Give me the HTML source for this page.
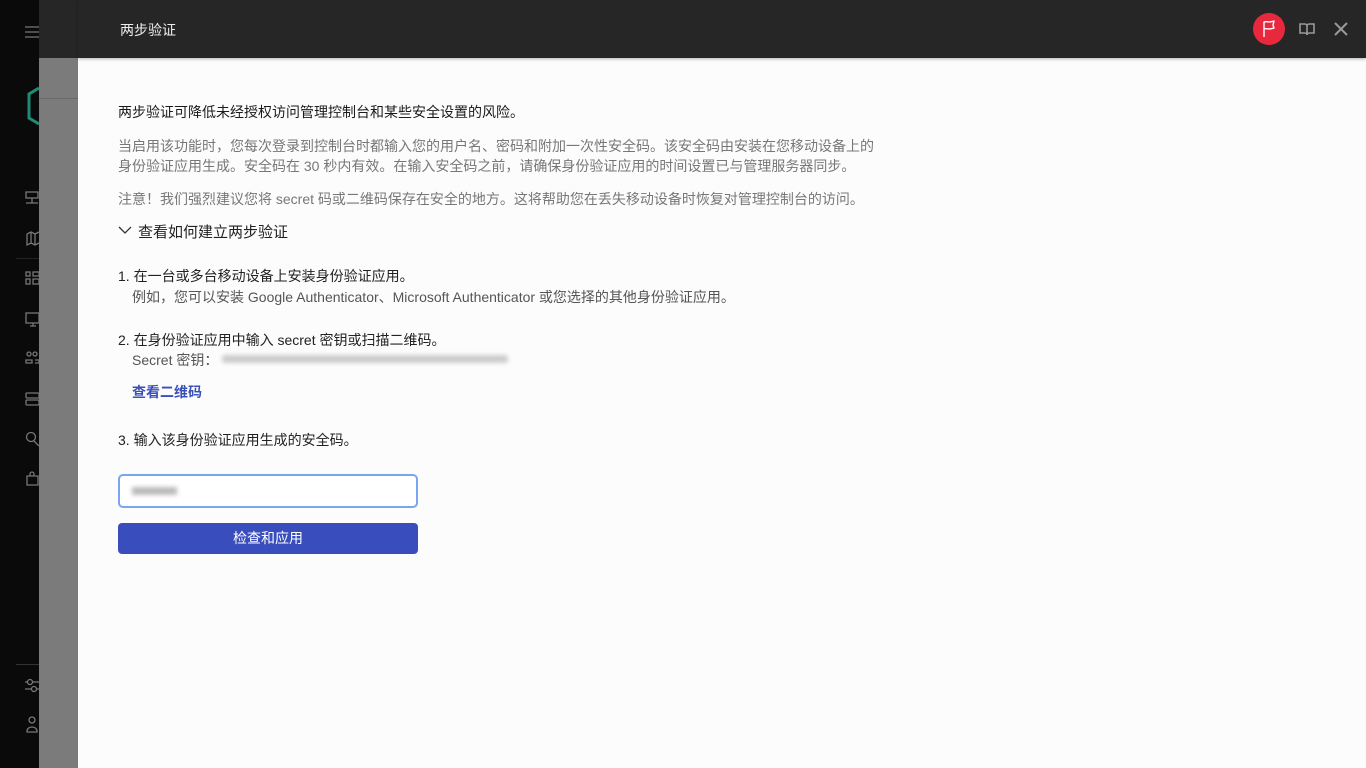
<!DOCTYPE html>
<html><head><meta charset="utf-8"><style>
*{margin:0;padding:0;box-sizing:border-box}
body{width:1366px;height:768px;overflow:hidden;background:#fcfcfc;font-family:"Liberation Sans","Noto Sans CJK SC",sans-serif;font-size:14px;position:relative}
.sb{position:absolute;left:0;top:0;width:39px;height:768px;background:#0a0a0a}
.ov{position:absolute;left:39px;top:0;width:39px;height:768px;background:#7b7b7b}
.ovh{position:absolute;left:39px;top:0;width:39px;height:58px;background:#262626}
.hd{position:absolute;left:78px;top:0;width:1288px;height:58px;background:#262626;box-shadow:0 1px 3px rgba(0,0,0,.3)}
.t{position:absolute;white-space:nowrap}
.ic{position:absolute}
</style></head><body>
<div class="sb"></div>
<div class="ov"></div>
<div class="ovh"></div>
<div style="position:absolute;left:39px;top:98px;width:39px;height:1px;background:#6a6a6a"></div>
<svg class="ic" style="left:0;top:0" width="39" height="768" fill="none" stroke="#777" stroke-width="1.3">
<path d="M25 27h14M25 32h14M25 37h14"/>
<path d="M39 88l-10 6v24l10 6" stroke="#1e8c74" stroke-width="3"/>
<rect x="26" y="192" width="12" height="6"/><path d="M32 198v5M26 203h12"/>
<path d="M27 234v11l4-2 4 2 4-2M27 234l4-2 4 2 4-2M31 232v11M35 234v11"/>
<rect x="26" y="272" width="4" height="4"/><rect x="33" y="272" width="6" height="4"/><rect x="26" y="279" width="4" height="5"/><rect x="33" y="279" width="6" height="5"/>
<rect x="26" y="313" width="13" height="10"/><path d="M30 326h6M33 323v3"/>
<circle cx="29" cy="354" r="2"/><circle cx="35" cy="354" r="2"/><path d="M26 363v-3h6v3zM35 360h4v3h-4"/>
<rect x="26" y="393" width="13" height="5" rx="1"/><rect x="26" y="400" width="13" height="5" rx="1"/>
<circle cx="31" cy="437" r="4.5"/><path d="M34 441l5 5"/>
<path d="M27 476h11v9H27zM30 476v-2a2 2 0 014 0v2"/>
<path d="M25 682h14M25 689h14"/><circle cx="30" cy="682" r="2.5" fill="#0a0a0a"/><circle cx="34" cy="689" r="2.5" fill="#0a0a0a"/>
<circle cx="32" cy="720" r="3"/><path d="M27 731a5 4 0 0110 0v1H27z"/>
</svg>
<div style="position:absolute;left:16px;top:664px;width:23px;height:1px;background:#333"></div>
<div style="position:absolute;left:16px;top:258px;width:23px;height:1px;background:#222"></div>
<div class="hd"></div>
<div class="t" style="left:120px;top:20px;color:#eee;font-size:14px">两步验证</div>
<div style="position:absolute;left:1253px;top:13px;width:32px;height:32px;border-radius:50%;background:#e8283c"></div>
<svg class="ic" style="left:1253px;top:13px" width="32" height="32" fill="none" stroke="#fff" stroke-width="1.4" stroke-linejoin="round"><path d="M11 24V9c3-1 5 1 10-1l-1 4 1 3c-5 2-7 0-10 1"/></svg>
<svg class="ic" style="left:1298px;top:20px" width="18" height="18" fill="none" stroke="#999" stroke-width="1.6"><path d="M2 4h5a2 2 0 012 2v9a2 2 0 00-2-2H2zM16 4h-5a2 2 0 00-2 2v9a2 2 0 012-2h5z"/></svg>
<svg class="ic" style="left:1333px;top:21px" width="16" height="16" stroke="#999" stroke-width="2"><path d="M2 2l12 12M14 2L2 14"/></svg>

<div class="t" style="left:118px;top:102px;color:#1a1a1a">两步验证可降低未经授权访问管理控制台和某些安全设置的风险。</div>
<div class="t" style="left:118px;top:136px;color:#777;line-height:20px">当启用该功能时，您每次登录到控制台时都输入您的用户名、密码和附加一次性安全码。该安全码由安装在您移动设备上的<br>身份验证应用生成。安全码在 30 秒内有效。在输入安全码之前，请确保身份验证应用的时间设置已与管理服务器同步。</div>
<div class="t" style="left:118px;top:189px;color:#777">注意！我们强烈建议您将 secret 码或二维码保存在安全的地方。这将帮助您在丢失移动设备时恢复对管理控制台的访问。</div>
<svg class="ic" style="left:118px;top:225px" width="14" height="10" fill="none" stroke="#333" stroke-width="1.3"><path d="M1 2l6 6 6-6"/></svg>
<div class="t" style="left:138px;top:221px;color:#222;font-size:15px">查看如何建立两步验证</div>
<div class="t" style="left:118px;top:266px;color:#222">1. 在一台或多台移动设备上安装身份验证应用。</div>
<div class="t" style="left:132px;top:287px;color:#555">例如，您可以安装 Google Authenticator、Microsoft Authenticator 或您选择的其他身份验证应用。</div>
<div class="t" style="left:118px;top:330px;color:#222">2. 在身份验证应用中输入 secret 密钥或扫描二维码。</div>
<div class="t" style="left:132px;top:350px;color:#555">Secret 密钥：</div>
<div style="position:absolute;left:222px;top:355px;width:286px;height:8px;background:#ccc;filter:blur(2px);border-radius:3px"></div>
<div class="t" style="left:132px;top:382px;color:#3a4fb8;font-weight:bold">查看二维码</div>
<div class="t" style="left:118px;top:430px;color:#222">3. 输入该身份验证应用生成的安全码。</div>
<div style="position:absolute;left:118px;top:474px;width:300px;height:34px;border:2px solid #7aa6f0;border-radius:5px;background:#fff"></div>
<div style="position:absolute;left:132px;top:487px;width:45px;height:8px;background:#bbb;filter:blur(2px)"></div>
<div style="position:absolute;left:118px;top:523px;width:300px;height:31px;background:#3a4dbd;border-radius:4px;color:#fff;text-align:center;line-height:30px">检查和应用</div>
</body></html>
